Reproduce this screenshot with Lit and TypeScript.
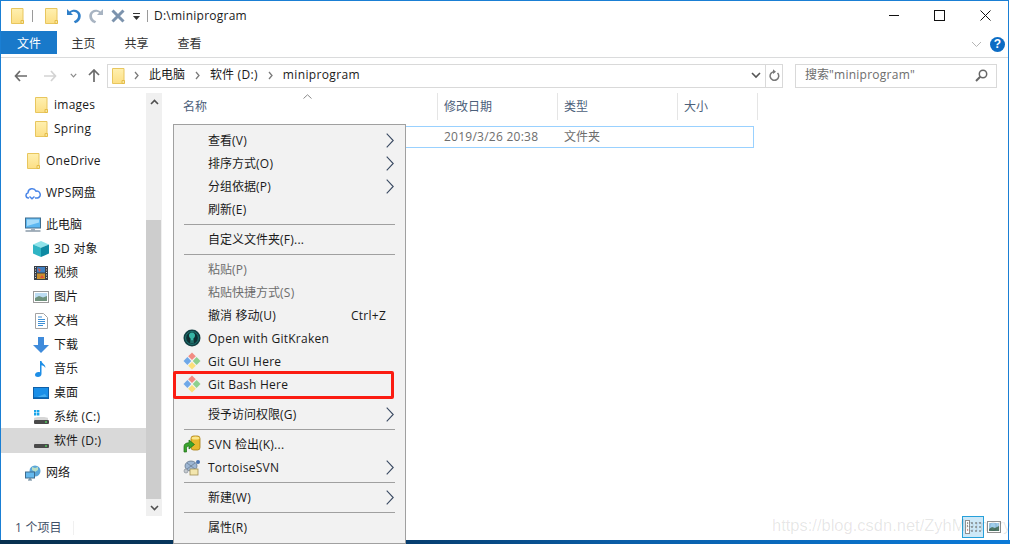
import { LitElement, html, css } from "lit";
import { customElement } from "lit/decorators.js";

/* Latin runs are hinted wider in the reference than the CJK runs, so they get their own tracking. */
const L = (s: string) => s.split(/([\x20-\x7e]+)/).filter(Boolean).map((p) =>
  /^[\x20-\x7e]+$/.test(p) ? html`<span class="lat">${p}</span>` : p);

const folder = (w = 13, h = 16) => html`<svg width=${w} height=${h} viewBox="0 0 13 16">
  <defs><linearGradient id="fg" x1="0" y1="0" x2="0" y2="1"><stop offset="0" stop-color="#fff0b0"/><stop offset="1" stop-color="#fcdf85"/></linearGradient></defs>
  <path d="M.5.5h11.5v15H.5z" fill="url(#fg)" stroke="#e8c65e"/>
  <path d="M10 12.5h2.5v3H10z" fill="#f6e6a0" stroke="#e5bc48"/></svg>`;

const gitIcon = html`<svg width="18" height="18" viewBox="0 0 18 18">
  <path d="M9 .5l3.8 3.800L9 8.100 5.200 4.300z" fill="#f28b82"/>
  <path d="M4.400 5.100L8.200 9 4.400 12.900.5 9z" fill="#6fa8e8"/>
  <path d="M13.600 5.100L17.500 9l-3.900 3.900L9.800 9z" fill="#8ed08e"/>
  <path d="M9 9.900l3.800 3.800L9 17.500l-3.800-3.800z" fill="#fbe07a"/></svg>`;

const krakenIcon = html`<svg width="18" height="18" viewBox="0 0 18 18">
  <circle cx="9" cy="9" r="8.5" fill="#123f42"/>
  <circle cx="9" cy="9" r="6.4" fill="#0f2f33" stroke="#1d7c78" stroke-width="1"/>
  <path d="M9 3.6c2 0 3 1.4 3 3 0 1.4-.8 2.4-1.6 3v4.6H9.5v-3h-1v3h-.9V9.6C6.800 9 6 8 6 6.600c0-1.600 1-3 3-3z" fill="#35b5a5"/></svg>`;

const svnIcon = html`<svg width="18" height="18" viewBox="0 0 18 18">
  <rect x="8" y="1" width="9" height="14" rx="2.500" fill="#e8b82e" stroke="#a67c10" stroke-width=".8"/>
  <ellipse cx="12.500" cy="3" rx="4" ry="1.600" fill="#fbe68a"/>
  <path d="M1 17V11.500C1 9 3 7.800 6 7.800V5l5.500 4.500L6 14v-3c-1.500 0-2.500.8-2.500 2.500V17z" fill="#3aa52c" stroke="#1c6b14" stroke-width=".7"/></svg>`;

const tortoiseIcon = html`<svg width="18" height="18" viewBox="0 0 18 18">
  <ellipse cx="8" cy="8" rx="6" ry="5" fill="#9db6d3" stroke="#66778c" stroke-width=".8"/>
  <path d="M4 5l8 6M12 5l-8 6" stroke="#66778c" stroke-width=".7"/>
  <circle cx="15" cy="4" r="2" fill="#4b74b0"/>
  <rect x="7" y="11" width="8" height="6" fill="#f3e6ae" stroke="#a08f55" stroke-width=".8"/>
  <circle cx="3" cy="13" r="2" fill="#c4c9cf" stroke="#7b838c" stroke-width=".6"/></svg>`;

const sideIcons: Record<string, unknown> = {
  folder: folder(),
  cloud: html`<svg width="16" height="16" viewBox="0 0 16 16"><path d="M4 13H3.500A2.700 2.700 0 0 1 3 7.700 4.200 4.200 0 0 1 11 6.200 3.400 3.400 0 0 1 12.500 13H10M4.500 11.500L7 13.800 9.500 11.500" fill="none" stroke="#4a86e8" stroke-width="1.500"/></svg>`,
  pc: html`<svg width="16" height="16" viewBox="0 0 16 16"><rect x=".5" y="1" width="15" height="10" fill="#5cb8f2" stroke="#3e6c8e"/><path d="M2 2.500h12v3L2 9z" fill="#a6dcfa"/><path d="M6 11.500h4v2H6z" fill="#9fb0bf"/><path d="M.5 14h15" stroke="#8a9aa8" stroke-width="1.500"/></svg>`,
  cube: html`<svg width="16" height="16" viewBox="0 0 16 16"><path d="M8 0l8 3.400-8 3.400-8-3.400z" fill="#8fe3ea"/><path d="M0 3.400l8 3.400V16l-8-3.400z" fill="#2fb4c4"/><path d="M16 3.400L8 6.800V16l8-3.400z" fill="#0e8aa3"/></svg>`,
  film: html`<svg width="16" height="16" viewBox="0 0 16 16"><rect x="1" y="1" width="14" height="14" fill="#3b3f46"/><rect x="4" y="2" width="8" height="5.500" fill="#3f7fc2"/><rect x="4" y="8.500" width="8" height="5.500" fill="#c9902f"/><path d="M5 3l3 2-2 2zM9 10l2 3H7z" fill="#e34f3a"/><path d="M2 2.500h1M2 5h1M2 7.500h1M2 10h1M2 12.500h1M13 2.500h1M13 5h1M13 7.500h1M13 10h1M13 12.500h1" stroke="#d8d8d8"/></svg>`,
  image: html`<svg width="16" height="14" viewBox="0 0 16 14"><rect x=".5" y="1.500" width="15" height="11" fill="#fff" stroke="#9a9a9a"/><rect x="2" y="3" width="12" height="8" fill="#bcdcf2"/><path d="M2 8l4-2 4 1.500L14 6v5H2z" fill="#6f927d"/></svg>`,
  doc: html`<svg width="13" height="16" viewBox="0 0 13 16"><path d="M.5.5h8l4 4v11H.5z" fill="#fff" stroke="#a3a3a3"/><path d="M3 4h4M3 6.500h7M3 8.500h7M3 10.500h7M3 12.500h5" stroke="#3d8fd6"/></svg>`,
  down: html`<svg width="16" height="16" viewBox="0 0 16 16"><path d="M5 0h6v8h5l-8 8-8-8h5z" fill="#3f8bdb"/></svg>`,
  music: html`<svg width="12" height="16" viewBox="0 0 12 16"><path d="M5 0h1.500c.3 2.500 4.500 3.500 3.800 7-.8-2-2.500-2.500-3.800-2.800V13c0 1.800-1.700 3-3.500 3C1.200 16 0 15 0 13.700 0 12.200 1.700 11 3.500 11c.6 0 1.100.1 1.500.3z" fill="#1e8ee6"/></svg>`,
  desktop: html`<svg width="16" height="12" viewBox="0 0 16 12"><rect x=".5" y=".5" width="15" height="11" fill="#1a8fe8" stroke="#0f5fa8"/><path d="M1 10.500h14" stroke="#0b6cb9"/><path d="M4 10l8-3 2 3z" fill="#45aef2"/></svg>`,
  driveC: html`<svg width="16" height="16" viewBox="0 0 16 16"><path d="M1 1h2.400v2.400H1zM4 1h2.400v2.400H4zM1 4h2.400v2.400H1zM4 4h2.400v2.400H4z" fill="#19a5ea"/><path d="M1 9.500C1 8.500 3 8 8 8s7 .5 7 1.500V11H1z" fill="#d6d6d6"/><rect x="1" y="11" width="15" height="4" rx="1" fill="#4a4a4a"/><rect x="12" y="12.300" width="2" height="1.400" fill="#4fd15a"/></svg>`,
  driveD: html`<svg width="16" height="16" viewBox="0 0 16 16"><path d="M1 9.500C1 8.500 3 8 8 8s7 .5 7 1.500V11H1z" fill="#d6d6d6"/><rect x="1" y="11" width="15" height="4" rx="1" fill="#4a4a4a"/><rect x="12" y="12.300" width="2" height="1.400" fill="#4fd15a"/></svg>`,
  net: html`<svg width="16" height="16" viewBox="0 0 16 16"><circle cx="10" cy="6" r="5.500" fill="#5aa6d8"/><path d="M7 2l3 1 3-1v3l-3 2-3-2z" fill="#b9ddc4"/><rect x=".5" y="7" width="9" height="6" fill="#65b9ee" stroke="#3e6c8e"/><path d="M3 15h4M5 13v2" stroke="#5a7a90" stroke-width="1.200"/></svg>`,
};

const side: [string, string, number, number][] = [
  ["folder", "images", 1, 0],
  ["folder", "Spring", 1, 0],
  ["folder", "OneDrive", 0, 1],
  ["cloud", "WPS网盘", 0, 1],
  ["pc", "此电脑", 0, 1],
  ["cube", "3D 对象", 1, 0],
  ["film", "视频", 1, 0],
  ["image", "图片", 1, 0],
  ["doc", "文档", 1, 0],
  ["down", "下载", 1, 0],
  ["music", "音乐", 1, 0],
  ["desktop", "桌面", 1, 0],
  ["driveC", "系统 (C:)", 1, 0],
  ["driveD", "软件 (D:)", 1, 0],
  ["net", "网络", 0, 1],
];

type Item = { t?: string; sep?: boolean; gap?: boolean; arrow?: boolean; dis?: boolean; key?: string; icon?: unknown; mark?: boolean };
const menu: Item[] = [
  { t: "查看(V)", arrow: true },
  { t: "排序方式(O)", arrow: true },
  { t: "分组依据(P)", arrow: true },
  { t: "刷新(E)" },
  { sep: true },
  { t: "自定义文件夹(F)..." },
  { sep: true },
  { t: "粘贴(P)", dis: true },
  { t: "粘贴快捷方式(S)", dis: true },
  { t: "撤消 移动(U)", key: "Ctrl+Z" },
  { t: "Open with GitKraken", icon: krakenIcon },
  { t: "Git GUI Here", icon: gitIcon },
  { t: "Git Bash Here", icon: gitIcon, mark: true },
  { gap: true },
  { t: "授予访问权限(G)", arrow: true },
  { sep: true },
  { t: "SVN 检出(K)...", icon: svnIcon },
  { t: "TortoiseSVN", icon: tortoiseIcon, arrow: true },
  { sep: true },
  { t: "新建(W)", arrow: true },
  { sep: true },
  { t: "属性(R)" },
];

const crumb = html`<svg class="crumb" width="5" height="9" viewBox="0 0 5 9"><path d="M1 1l3 3.500L1 8" fill="none" stroke="#7a7a7a" stroke-width="1.300"/></svg>`;

@customElement("app-root")
export class AppRoot extends LitElement {
  static styles = css`
    :host { display: block; width: 1010px; height: 544px; background: #fff; position: relative; overflow: hidden;
      font-family: "Open Sans", "Noto Sans CJK SC", sans-serif; font-size: 12px; color: #1a1a1a; line-height: 16px; }
    .lat { letter-spacing: .25px; }
    .win { width: 1009px; height: 540px; box-sizing: border-box; border: 1px solid #1a7fd4; border-bottom: 0; display: flex; flex-direction: column; background: #fff; }
    .bottom { height: 4px; background: linear-gradient(90deg, #07304f 0, #063d6e 40%, #0a5ea8 62%, #0b7ad8 100%); }
    .title { height: 30px; display: flex; align-items: center; position: relative; flex: none; }
    .qa { display: flex; align-items: center; padding-left: 10px; }
    .vsep { width: 1px; height: 12px; background: #9a9a9a; }
    .ttext { margin-left: 6px; }
    .controls { margin-left: auto; display: flex; align-items: center; padding-right: 17px; gap: 35px; padding-bottom: 1px; }
    .tabs { height: 23px; display: flex; flex: none; align-items: center; }
    .tab-on { width: 56px; height: 23px; box-sizing: border-box; padding-top: 2px; background: #1979ca; color: #fff; display: flex; align-items: center; justify-content: center; }
    .tab { width: 53px; text-align: center; color: #333; padding-top: 2px; }
    .rib-right { margin-left: auto; display: flex; align-items: center; gap: 8px; padding-right: 3px; margin-top: 3px; }
    .help { width: 15px; height: 15px; border-radius: 50%; background: #0c6cc4; color: #fff; font: bold 12px/15px "Liberation Sans", sans-serif; text-align: center; }
    .rule { height: 1px; background: #dadbdc; margin-top: 3px; flex: none; }
    .addr { display: flex; align-items: center; height: 34px; flex: none; padding-top: 1px; box-sizing: border-box; }
    .nav { width: 106px; display: flex; align-items: center; padding-left: 13px; box-sizing: border-box; }
    .box { height: 24px; box-sizing: border-box; border: 1px solid #d9d9d9; display: flex; align-items: center; }
    .box > span { padding-bottom: 2px; }
    .path { width: 676px; }
    .path .crumb { margin: 0 10px 0 10px; }
    .path span { color: #1a1a1a; }
    .path .lat { letter-spacing: .35px; }
    .path .fold { margin-left: 4px; display: flex; margin-right: -1px; }
    .path .end { margin-left: auto; display: flex; align-items: center; height: 100%; }
    .path .refresh { width: 16px; height: 100%; border-left: 1px solid #d9d9d9; display: flex; align-items: center; justify-content: center; margin-left: 4px; }
    .search { width: 202px; margin-left: 12px; padding: 0 8px 0 9px; color: #6d6d6d; justify-content: space-between; }
    .main { flex: 1; display: flex; min-height: 0; }
    .list { width: 145px; flex: none; }
    .row { height: 24px; box-sizing: border-box; padding-top: 2px; display: flex; align-items: center; }
    .ic { width: 16px; height: 16px; display: flex; align-items: center; justify-content: center; margin-right: 5px; flex: none; }
    .l1 { padding-left: 32px; }
    .l0 { padding-left: 24px; }
    .before { margin-top: 8px; }
    .cur { background: #d9d9d9; height: 25px; margin-bottom: -1px; padding-bottom: 1px; }
    .sb { width: 16px; margin-top: 1px; margin-bottom: -1px; background: #f0f0f0; display: flex; flex-direction: column; flex: none; }
    .sb .btn { height: 17px; display: flex; align-items: center; justify-content: center; flex: none; }
    .sb .track { height: 110px; flex: none; }
    .sb .thumb { flex: 1; background: #cdcdcd; margin-right: 1px; }
    .content { flex: 1; padding-left: 11px; min-width: 0; position: relative; }
    .head { display: flex; height: 27px; margin-top: 1px; color: #4c607a; }
    .hc { border-right: 1px solid #e5e5e5; padding: 1px 0 0 6px; display: flex; align-items: center; box-sizing: border-box; height: 27px; }
    .hc.first { padding-left: 10px; }
    .sort { position: absolute; left: 141px; top: 2px; }
    .file { margin-top: 6px; margin-left: 2px; width: 579px; height: 22px; box-sizing: border-box; border: 1px solid #99d1ff; display: flex; align-items: center; color: #6d6d6d; padding-left: 268px; }
    .file .d { width: 120px; }
    .status { height: 24px; flex: none; display: flex; align-items: center; padding: 2px 0 0 14px; box-sizing: border-box; color: #3f5068; position: relative; margin-bottom: 1px; }
    .status .bar { width: 1px; height: 14px; background: #f0f0f0; margin-left: 11px; }
    .views { margin-left: auto; display: flex; align-items: center; padding-right: 7px; gap: 3px; margin-top: -2px; }
    .view-on { width: 22px; height: 22px; box-sizing: border-box; background: #cde8f7; border: 1px solid #26a0da; display: flex; align-items: center; justify-content: center; }
    .mark-wm { position: absolute; left: 772px; top: 514px; font: 16.5px/22px "Liberation Sans", sans-serif; color: rgba(0,0,0,.1); white-space: nowrap; pointer-events: none; }
    .menu { position: absolute; left: 173px; top: 124px; width: 233px; height: 420px; box-sizing: border-box; background: #f2f2f2; border: 1px solid #a0a0a0; padding-top: 4px; }
    .mi { height: 23px; position: relative; display: flex; align-items: center; padding-left: 34px; padding-right: 12px; color: #1a1a1a; }
    .mi.dis { color: #6d6d6d; }
    .mi .mic { position: absolute; left: 9px; top: 2px; width: 18px; height: 18px; display: flex; }
    .mi .key { margin-left: auto; padding-right: 7px; }
    .mi .arr { position: absolute; left: 212px; top: 4px; display: flex; }
    .msep { height: 7px; display: flex; align-items: center; padding: 0 10px; }
    .msep i { display: block; height: 1px; width: 100%; background: #a0a0a0; }
    .mgap { height: 7px; }
    .red { position: absolute; left: -1px; right: 11px; top: -2px; bottom: -3px; border: 3px solid #fb1c12; border-radius: 2px; pointer-events: none; }
  `;

  render() {
    const arrow = html`<svg width="8" height="15" viewBox="0 0 8 15"><path d="M.7 .7L7.200 7.500.7 14.300" fill="none" stroke="#3a4a62" stroke-width="1.100"/></svg>`;
    return html`
      <div class="win">
        <div class="title">
          <div class="qa">
            ${folder(13, 16)}
            <i class="vsep" style="margin:0 12px 0 8px"></i>
            ${folder(13, 16)}
            <svg style="margin-left:8px" width="15" height="16" viewBox="0 0 15 16"><path d="M1 1v6h6L4.800 4.800C7 3 10.800 3.800 11.800 6.500c.8 2.500-.5 5.500-4 6.800l1.300 2c4.500-1.500 6.500-5.500 5.300-9.300C13 1.500 7.500 .2 3.500 3.500z" fill="#2f7fc9"/></svg>
            <svg style="margin-left:8px" width="15" height="16" viewBox="0 0 15 16"><path d="M14 1v6H8l2.200-2.200C8 3 4.200 3.800 3.200 6.500c-.8 2.500.5 5.500 4 6.800l-1.300 2C1.400 13.800-.6 9.800.6 6 2 1.500 7.500 .2 11.500 3.500z" fill="#a8b4c2"/></svg>
            <svg style="margin-left:7px" width="14" height="14" viewBox="0 0 14 14"><path d="M1.500 1.500l11 11M12.500 1.500l-11 11" stroke="#7c93ad" stroke-width="3"/></svg>
            <svg style="margin-left:7px" width="9" height="9" viewBox="0 0 9 9"><path d="M1 1.500h7" stroke="#333"/><path d="M1 4h7L4.500 8z" fill="#333"/></svg>
            <i class="vsep" style="margin-left:6px"></i>
          </div>
          <span class="ttext">${L("D:\\miniprogram")}</span>
          <div class="controls">
            <svg width="10" height="11" viewBox="0 0 10 11"><path d="M0 5.500h10" stroke="#111"/></svg>
            <svg width="11" height="11" viewBox="0 0 11 11"><rect x=".5" y=".5" width="10" height="10" fill="none" stroke="#111"/></svg>
            <svg width="11" height="11" viewBox="0 0 11 11"><path d="M.5 .5l10 10M10.500 .5l-10 10" stroke="#111"/></svg>
          </div>
        </div>
        <div class="tabs">
          <div class="tab-on">文件</div>
          <div class="tab">主页</div><div class="tab">共享</div><div class="tab">查看</div>
          <div class="rib-right">
            <svg width="11" height="7" viewBox="0 0 11 7"><path d="M1 1l4.500 4.500L10 1" fill="none" stroke="#b5b5b5"/></svg>
            <div class="help">?</div>
          </div>
        </div>
        <div class="rule"></div>
        <div class="addr">
          <div class="nav">
            <svg width="13" height="12" viewBox="0 0 13 12"><path d="M6 1L1.500 6 6 11M2 6h11" fill="none" stroke="#6b6b6b" stroke-width="1.700"/></svg>
            <svg style="margin-left:17px" width="13" height="12" viewBox="0 0 13 12"><path d="M7 1l4.500 5L7 11M11 6H0" fill="none" stroke="#d3d3d3" stroke-width="1.700"/></svg>
            <svg style="margin-left:13px" width="7" height="5" viewBox="0 0 7 5"><path d="M.8 .8L3.500 3.800 6.200 .8" fill="none" stroke="#8a8a8a" stroke-width="1.200"/></svg>
            <svg style="margin-left:11px" width="12" height="13" viewBox="0 0 12 13"><path d="M1 6l5-5 5 5M6 1.500V13" fill="none" stroke="#6b6b6b" stroke-width="1.700"/></svg>
          </div>
          <div class="box path">
            <div class="fold">${folder(13, 16)}</div>
            ${crumb}<span>此电脑</span>${crumb}<span>${L("软件 (D:)")}</span>${crumb}<span>${L("miniprogram")}</span>
            <div class="end">
              <svg width="10" height="7" viewBox="0 0 10 7"><path d="M1 1l4 4 4-4" fill="none" stroke="#555" stroke-width="1.600"/></svg>
              <div class="refresh"><svg width="11" height="13" viewBox="0 0 11 13"><path d="M8.500 4a4.300 4.300 0 1 1-3-1.300" fill="none" stroke="#777" stroke-width="1.500"/><path d="M4 .3l3 2.400L4 5z" fill="#777"/></svg></div>
            </div>
          </div>
          <div class="box search">
            <span>${L('搜索"miniprogram"')}</span>
            <svg width="13" height="13" viewBox="0 0 13 13"><circle cx="8" cy="5" r="3.700" fill="none" stroke="#666" stroke-width="1.500"/><path d="M5.200 7.800L1 12" stroke="#666" stroke-width="2"/></svg>
          </div>
        </div>
        <div class="main">
          <div class="list">
            ${side.map(([ic, t, lvl, gapped]) => html`
              <div class="row ${lvl ? "l1" : "l0"} ${gapped ? "before" : ""} ${t.startsWith("软件") ? "cur" : ""}">
                <span class="ic">${sideIcons[ic]}</span><span>${L(t)}</span>
              </div>`)}
          </div>
          <div class="sb">
            <div class="btn"><svg width="9" height="6" viewBox="0 0 9 6"><path d="M1 5l3.500-3.500L8 5" fill="none" stroke="#505050" stroke-width="1.600"/></svg></div>
            <div class="track"></div>
            <div class="thumb"></div>
            <div class="btn"><svg width="9" height="6" viewBox="0 0 9 6"><path d="M1 1l3.500 3.500L8 1" fill="none" stroke="#505050" stroke-width="1.600"/></svg></div>
          </div>
          <div class="content">
            <svg class="sort" width="9" height="5" viewBox="0 0 9 5"><path d="M.5 4.500L4.500 .8 8.500 4.500" fill="none" stroke="#8a8a8a"/></svg>
            <div class="head">
              <div class="hc first" style="width:265px">名称</div>
              <div class="hc" style="width:120px">修改日期</div>
              <div class="hc" style="width:120px">类型</div>
              <div class="hc" style="width:80px">大小</div>
            </div>
            <div class="file"><span class="d">${L("2019/3/26 20:38")}</span><span>文件夹</span></div>
          </div>
        </div>
        <div class="status">
          <span>${L("1 ")}个项目</span><i class="bar"></i>
          <div class="views">
            <div class="view-on"><svg width="16" height="14" viewBox="0 0 16 14"><rect x=".5" y=".5" width="4" height="13" fill="#fff" stroke="#8f8f8f"/><path d="M2 3h1M2 6h1" stroke="#444"/><path d="M2 10h1" stroke="#c03030"/><path d="M6 3h2M10 3h2M14 3h2M6 7h2M10 7h2M14 7h2M6 11h2M10 11h2M14 11h2" stroke="#666"/></svg></div>
            <svg width="14" height="12" viewBox="0 0 14 12"><rect x=".5" y=".5" width="13" height="11" fill="#fff" stroke="#8f8f8f"/><rect x="2" y="2" width="10" height="8" fill="#9fcdec"/><path d="M2 8l3-2 3 1 4-2v5H2z" fill="#4f7868"/></svg>
          </div>
        </div>
      </div>
      <div class="bottom"></div>
      <div class="mark-wm">https://blog.csdn.net/ZyhMemory</div>
      <div class="menu">
        ${menu.map((m) =>
          m.sep ? html`<div class="msep"><i></i></div>`
          : m.gap ? html`<div class="mgap"></div>`
          : html`<div class="mi ${m.dis ? "dis" : ""}">
              ${m.icon ? html`<span class="mic">${m.icon}</span>` : ""}
              <span>${L(m.t!)}</span>
              ${m.key ? html`<span class="key">${L(m.key)}</span>` : ""}
              ${m.arrow ? html`<span class="arr">${arrow}</span>` : ""}
              ${m.mark ? html`<i class="red"></i>` : ""}
            </div>`)}
      </div>
    `;
  }
}
